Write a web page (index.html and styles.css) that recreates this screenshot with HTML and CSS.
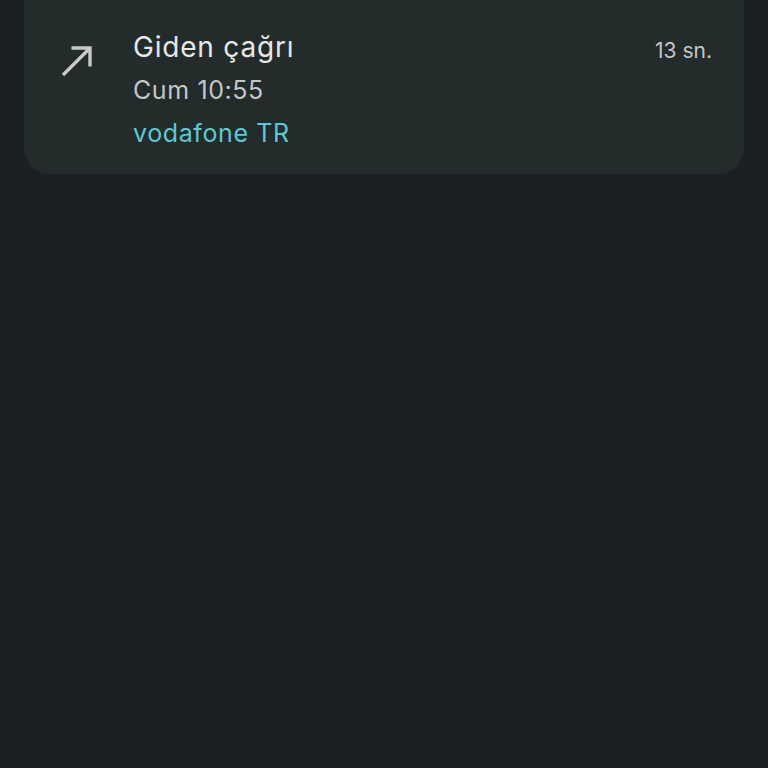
FILE: index.html
```html
<!DOCTYPE html>
<html lang="tr">

<head>
    <meta charset="UTF-8">
    <meta name="viewport" content="width=device-width, initial-scale=1.0">
    <title>Arama ayrıntıları</title>
    <link rel="stylesheet" href="styles.css">
</head>

<body>
    <main class="history">
        <!-- Call entry -->
        <div class="call-card">
            <div class="call-icon">
                <svg width="44" height="44" viewBox="0 0 44 44">
                    <path d="M9 36 L36 9 M17.5 9 H36 V27.5" fill="none" stroke="#c6caca" stroke-width="3.4" />
                </svg>
            </div>
            <div class="call-info">
                <div class="call-type">Giden çağrı</div>
                <div class="call-date">Cum 10:55</div>
                <div class="call-sim">vodafone TR</div>
            </div>
            <div class="call-duration">13 sn.</div>
        </div>
    </main>
</body>

</html>
```

FILE: styles.css
```css
body {
    margin: 0;
    padding: 0;
    background-color: #1b2123;
    font-family: Inter, Roboto, sans-serif;
    color: #e2e4e4;
    height: 768px;
    overflow: hidden;
}

.history {
    padding: 0 24px;
}

.call-card {
    display: flex;
    align-items: flex-start;
    background-color: #242b2b;
    border-radius: 0 0 26px 26px;
    padding: 26px 32px 19px 30px;
}

.call-icon {
    width: 44px;
    height: 44px;
    margin-top: 13px;
    margin-right: 35px;
}

.call-icon svg {
    display: block;
}

.call-info {
    flex: 1;
    line-height: 43px;
}

.call-type {
    font-size: 28px;
    letter-spacing: 0.8px;
    color: #e6e8e8;
}

.call-date {
    font-size: 25px;
    letter-spacing: 0.6px;
    color: #c3c7c7;
}

.call-sim {
    font-size: 25px;
    letter-spacing: 0.6px;
    color: #5ec9d6;
}

.call-duration {
    font-size: 21px;
    line-height: 43px;
    padding-top: 3px;
    color: #c3c7c7;
}
```
